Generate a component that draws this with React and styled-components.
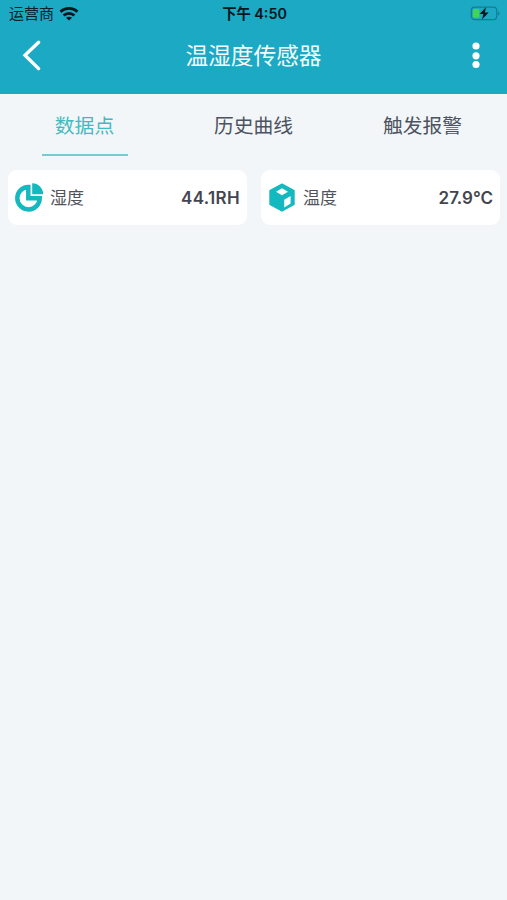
import React from 'react';
import styled, { createGlobalStyle } from 'styled-components';

const GlobalStyle = createGlobalStyle`
  * {
    box-sizing: border-box;
  }
  body {
    margin: 0;
    background: #f3f6f8;
    font-family: Inter, "Noto Sans CJK SC", sans-serif;
  }
`;

const Screen = styled.div`
  min-height: 100vh;
  background: #f3f6f8;
`;

const Header = styled.header`
  height: 94px;
  background: #1ba9c4;
`;

const Columns = styled.div`
  display: grid;
  grid-template-columns: 1fr auto 1fr;
  align-items: center;
`;

const StatusBar = styled(Columns)`
  height: 27px;
  padding: 0 7px 0 9px;
  color: #06222b;
  font-size: 15px;
  line-height: 27px;
`;

const Carrier = styled.div`
  display: flex;
  align-items: center;
  gap: 5px;
`;

const Clock = styled.div`
  color: #03161c;
  font-size: 14.3px;
  font-weight: 600;
  white-space: pre;
`;

const NavBar = styled(Columns)`
  height: 57px;
  padding: 0 26px 0 22px;
`;

const Title = styled.h1`
  margin: 0;
  padding-left: 4px;
  color: #f4fcfd;
  font-size: 22.7px;
  font-weight: 400;
  line-height: 57px;
`;

const IconButton = styled.button`
  display: flex;
  justify-self: ${props => props.$align};
  padding: 0;
  border: 0;
  background: none;
`;

const EndSlot = styled.div`
  display: flex;
  justify-self: end;
`;

const Tabs = styled.nav`
  display: grid;
  grid-template-columns: repeat(3, 1fr);
  height: 62px;
`;

const Tab = styled.button`
  display: flex;
  justify-content: center;
  justify-self: center;
  min-width: 86px;
  height: 62px;
  padding: 4px 0 0;
  border: 0;
  border-bottom: 2px solid ${props => props.$active ? '#78cbd0' : 'transparent'};
  background: none;
  color: ${props => props.$active ? '#42bbc0' : '#4c5360'};
  font-family: inherit;
  font-size: 19.8px;
  line-height: 56px;
`;

const Cards = styled.main`
  display: grid;
  grid-template-columns: 1fr 1fr;
  gap: 14px;
  padding: 14px 7px 0 8px;
`;

const Card = styled.section`
  display: flex;
  align-items: center;
  height: 55px;
  padding: 0 7px;
  border-radius: 9px;
  background: #fff;
`;

const Label = styled.span`
  margin-left: 7px;
  padding-bottom: 2px;
  color: #50535b;
  font-size: 17px;
`;

const Value = styled.span`
  margin-left: auto;
  color: #434550;
  font-size: 17px;
  font-weight: 600;
  letter-spacing: ${props => props.$spacing};
`;

const WifiIcon = () => (
    <svg width="20" height="16" viewBox="0 0 20 16" fill="none" stroke="#03161c" strokeWidth="2.7">
        <path d="M1.5 5.8C6.2 1.3 13.8 1.3 18.5 5.8"/>
        <path d="M4.6 9.5C7.7 6.6 12.3 6.6 15.4 9.5"/>
        <path d="M10 14.6 7 11.8C8.7 10.3 11.3 10.3 13 11.8Z" fill="#03161c" stroke="none"/>
    </svg>
);

const BatteryIcon = () => (
    <svg width="30" height="15" viewBox="0 0 30 15">
        <rect x="1.3" y="1.2" width="25.4" height="12.4" rx="3.4" fill="none" stroke="#157d90" strokeWidth="1.2"/>
        <path d="M28 5.2C30 6 30 8.8 28 9.6Z" fill="#157d90"/>
        <rect x="3" y="3" width="6.4" height="8.8" rx="1.5" fill="#42d455"/>
        <path d="M16 1.2 9.6 8H13.4L12 13.6 18.6 6.4H14.8Z" fill="#03161c"/>
    </svg>
);

const BackIcon = () => (
    <svg width="20" height="32" viewBox="0 0 20 32" fill="none" stroke="#fff" strokeWidth="3.4" strokeLinecap="round">
        <path d="M16.6 2.3 3 15.3 16.6 28.6"/>
    </svg>
);

const MoreIcon = () => (
    <svg width="10" height="28" viewBox="0 0 10 28" fill="#fff">
        <circle cx="5" cy="4" r="3.6"/>
        <circle cx="5" cy="13.8" r="3.6"/>
        <circle cx="5" cy="22.5" r="3.6"/>
    </svg>
);

const PieIcon = () => (
    <svg width="28" height="29" viewBox="0 0 28 29">
        <path d="M13.3 4V15.2H24.7A11.2 11.2 0 1 1 13.3 4Z" fill="none" stroke="#14b8bf" strokeWidth="4.5"/>
        <path d="M17.2.2A11 11 0 0 1 28.2 11.3H17.2Z" fill="#14b8bf"/>
    </svg>
);

const CubeIcon = () => (
    <svg width="28" height="29" viewBox="0 0 28 29">
        <path d="M14 1.2 26 7.7V21.5L14 28 2 21.5V7.7Z" fill="#14b8bf" stroke="#14b8bf" strokeWidth="1.4" strokeLinejoin="round"/>
        <path d="M14 5.2 20 8.7 14 12.2 8 8.7Z" fill="#fff"/>
        <path d="M16.2 16.8 22.6 13V20.6L16.2 24.4Z" fill="#fff"/>
    </svg>
);

const tabs = ['数据点', '历史曲线', '触发报警'];

const readings = [
    { label: '湿度', value: '44.1RH', spacing: '0.35px', Icon: PieIcon },
    { label: '温度', value: '27.9°C', spacing: '0', Icon: CubeIcon }
];

const App = () => (
    <>
        <GlobalStyle />
        <Screen>
            <Header>
                <StatusBar>
                    <Carrier>运营商<WifiIcon /></Carrier>
                    <Clock>下午 4:50</Clock>
                    <EndSlot><BatteryIcon /></EndSlot>
                </StatusBar>
                <NavBar>
                    <IconButton $align="start" aria-label="返回"><BackIcon /></IconButton>
                    <Title>温湿度传感器</Title>
                    <IconButton $align="end" aria-label="更多"><MoreIcon /></IconButton>
                </NavBar>
            </Header>
            <Tabs>
                {tabs.map((tab, index) => <Tab key={tab} $active={index === 0}>{tab}</Tab>)}
            </Tabs>
            <Cards>
                {readings.map(({ label, value, spacing, Icon }) => (
                    <Card key={label}>
                        <Icon />
                        <Label>{label}</Label>
                        <Value $spacing={spacing}>{value}</Value>
                    </Card>
                ))}
            </Cards>
        </Screen>
    </>
);

export default App;
